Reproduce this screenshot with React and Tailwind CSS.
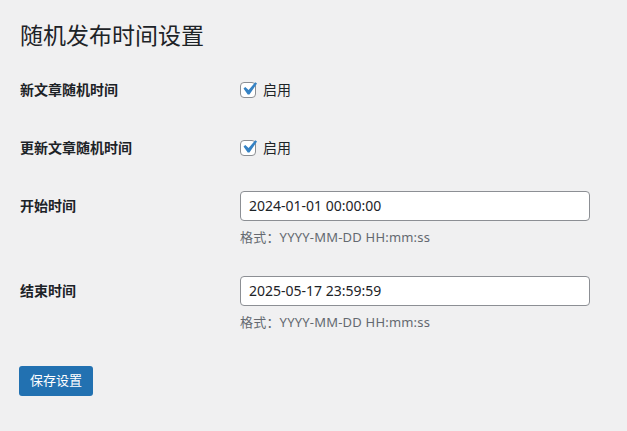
function Check() {
    return (
        <span className="flex items-center justify-center w-4 h-4 bg-white border border-[#8c8f94] rounded-[4px]">
            <svg viewBox="0 0 20 20" className="w-[26px] h-[26px] shrink-0 -mt-[2px] ml-[1px]">
                <path
                    d="M14.83 4.89l1.34.94-5.81 8.38H9.02L5.78 9.67l1.34-1.25 2.57 2.4z"
                    fill="#3582c4"
                />
            </svg>
        </span>
    )
}

function Row({ label, className, children }) {
    return (
        <div className={'flex ' + className}>
            <div className="w-[220px] shrink-0 font-bold text-[14px] leading-[30px]">
                {label}
            </div>
            <div className="flex-1">{children}</div>
        </div>
    )
}

export default function App() {
    const font = {
        fontFamily:
            '"Noto Sans", "Noto Sans CJK SC", sans-serif',
    }
    return (
        <div
            className="w-[627px] h-[431px] bg-[#f0f0f1] text-[#1d2327] px-[20px] pt-[20px]"
            style={font}
        >
            <h1 className="text-[23px] leading-[30px] font-normal">随机发布时间设置</h1>

            <Row label="新文章随机时间" className="mt-[25px] items-center">
                <label className="flex items-center gap-[7px] text-[14px] leading-[30px]">
                    <Check />
                    启用
                </label>
            </Row>

            <Row label="更新文章随机时间" className="mt-[28px] items-center">
                <label className="flex items-center gap-[7px] text-[14px] leading-[30px]">
                    <Check />
                    启用
                </label>
            </Row>

            <Row label="开始时间" className="mt-[28px] items-start">
                <div className="w-[350px] h-[30px] bg-white border border-[#8c8f94] rounded-[4px] px-[8px] text-[14px] leading-[28px]">
                    2024-01-01 00:00:00
                </div>
                <p className="mt-[6px] text-[13px] leading-[20px] text-[#646970] tracking-[0.2px]">
                    格式：YYYY-MM-DD HH:mm:ss
                </p>
            </Row>

            <Row label="结束时间" className="mt-[29px] items-start">
                <div className="w-[350px] h-[30px] bg-white border border-[#8c8f94] rounded-[4px] px-[8px] text-[14px] leading-[28px]">
                    2025-05-17 23:59:59
                </div>
                <p className="mt-[6px] text-[13px] leading-[20px] text-[#646970] tracking-[0.2px]">
                    格式：YYYY-MM-DD HH:mm:ss
                </p>
            </Row>

            <button className="mt-[34px] -ml-[1px] h-[30px] px-[11px] bg-[#2271b1] text-white text-[13px] rounded-[3px]">
                保存设置
            </button>
        </div>
    )
}
